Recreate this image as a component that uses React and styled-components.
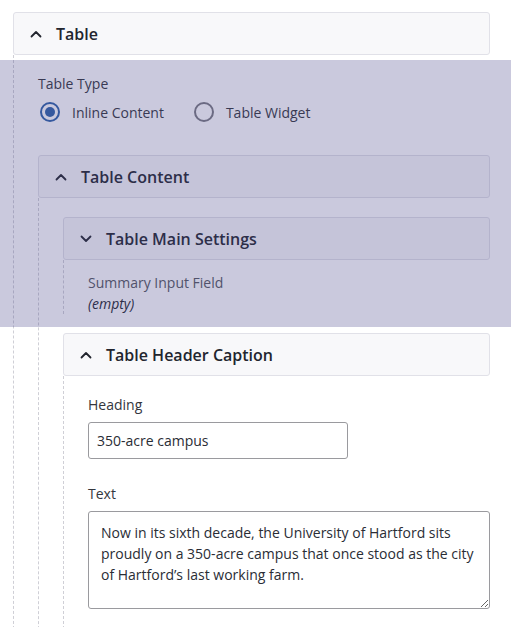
import React from 'react';
import styled, { createGlobalStyle } from 'styled-components';

const GlobalStyle = createGlobalStyle`
  html, body {
    margin: 0;
    padding: 0;
    background: #fff;
  }
  body {
    font-family: "Open Sans", "Noto Sans", sans-serif;
    color: #2a2d35;
  }
`;

const Page = styled.div`
  position: relative;
  width: 511px;
  height: 627px;
  overflow: hidden;
  padding: 12px 21px 0 13px;
  box-sizing: border-box;
`;

const Highlight = styled.div`
  position: absolute;
  left: 0;
  right: 0;
  top: 60px;
  height: 267px;
  background: rgba(72, 69, 138, 0.29);
  pointer-events: none;
`;

const Section = styled.div`
  display: flex;
  flex-direction: column;
  margin-top: ${(p) => p.$gap || 0}px;
`;

const Header = styled.div`
  display: flex;
  align-items: center;
  gap: 14px;
  height: 43px;
  box-sizing: border-box;
  padding-left: 16px;
  background: #f8f8fa;
  border: 1px solid #e1e1e8;
  border-radius: 3px;
  font-size: 16px;
  font-weight: 600;
  color: #22252e;
`;

const Body = styled.div`
  display: flex;
  flex-direction: column;
  border-left: 1px dashed #cfcfd6;
  padding: ${(p) => p.$top || 19}px 0 ${(p) => p.$bottom || 0}px 24px;
`;

const Label = styled.div`
  font-size: 14px;
  line-height: 20px;
  color: ${(p) => (p.$muted ? '#555860' : '#33363d')};
`;

const Empty = styled.div`
  font-size: 14px;
  line-height: 20px;
  font-style: italic;
  color: #22252e;
  margin-top: 1px;
`;

const RadioRow = styled.div`
  display: flex;
  align-items: center;
  gap: 30px;
  margin: 8px 0 0 2px;
  height: 20px;
`;

const RadioOption = styled.label`
  display: flex;
  align-items: center;
  gap: 12px;
  font-size: 14px;
  color: #33363d;
`;

const RadioDot = styled.span`
  width: 20px;
  height: 20px;
  box-sizing: border-box;
  border-radius: 50%;
  border: 2px solid ${(p) => (p.$on ? '#2f62a8' : '#7a7a80')};
  display: flex;
  align-items: center;
  justify-content: center;
  background: #fff;

  &::after {
    content: '';
    width: 10px;
    height: 10px;
    border-radius: 50%;
    background: ${(p) => (p.$on ? '#2f62a8' : 'transparent')};
  }
`;

const Input = styled.div`
  margin-top: 7px;
  width: 260px;
  height: 37px;
  box-sizing: border-box;
  border: 1px solid #9a9a9e;
  border-radius: 3px;
  padding: 0 8px;
  display: flex;
  align-items: center;
  font-size: 14px;
  color: #2a2d35;
  background: #fff;
`;

const TextArea = styled.textarea`
  margin-top: 7px;
  width: 100%;
  height: 98px;
  box-sizing: border-box;
  border: 1px solid #9a9a9e;
  border-radius: 3px;
  padding: 10px 12px;
  font-family: "Open Sans", "Noto Sans", sans-serif;
  font-size: 14px;
  line-height: 21px;
  color: #2a2d35;
  resize: vertical;
  outline: none;
`;

const Field = styled.div`
  display: flex;
  flex-direction: column;
  margin-top: ${(p) => p.$gap || 0}px;
`;

const Chevron = ({ down }) => (
  <svg width="12" height="8" viewBox="0 0 12 8" fill="none">
    <path
      d={down ? 'M1.5 1.5 L6 6 L10.5 1.5' : 'M1.5 6.5 L6 2 L10.5 6.5'}
      stroke="#22252e"
      strokeWidth="1.8"
      strokeLinecap="round"
      strokeLinejoin="round"
    />
  </svg>
);

const App = () => (
  <>
    <GlobalStyle />
    <Page>
      <Section>
        <Header>
          <Chevron />
          Table
        </Header>
        <Body $top={19}>
          <Label>Table Type</Label>
          <RadioRow>
            <RadioOption>
              <RadioDot $on />
              Inline Content
            </RadioOption>
            <RadioOption>
              <RadioDot />
              Table Widget
            </RadioOption>
          </RadioRow>
          <Section $gap={33}>
            <Header>
              <Chevron />
              Table Content
            </Header>
            <Body $top={19}>
              <Section>
                <Header>
                  <Chevron down />
                  Table Main Settings
                </Header>
                <Body $top={13}>
                  <Label $muted>Summary Input Field</Label>
                  <Empty>(empty)</Empty>
                </Body>
              </Section>
              <Section $gap={19}>
                <Header>
                  <Chevron />
                  Table Header Caption
                </Header>
                <Body $top={19} $bottom={40}>
                  <Field>
                    <Label>Heading</Label>
                    <Input>350-acre campus</Input>
                  </Field>
                  <Field $gap={25}>
                    <Label>Text</Label>
                    <TextArea
                      readOnly
                      defaultValue="Now in its sixth decade, the University of Hartford sits proudly on a 350-acre campus that once stood as the city of Hartford’s last working farm."
                    />
                  </Field>
                </Body>
              </Section>
            </Body>
          </Section>
        </Body>
      </Section>
      <Highlight />
    </Page>
  </>
);

export default App;
